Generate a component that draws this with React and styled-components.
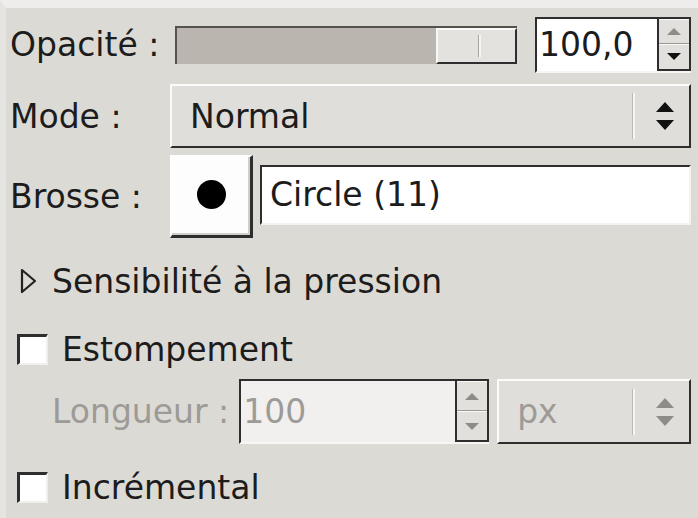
import React from "react";
import styled, { createGlobalStyle } from "styled-components";

const Global = createGlobalStyle`
  html, body { margin: 0; padding: 0; background: #dcdad5; }
  body { font-family: "DejaVu Sans", "Liberation Sans", sans-serif; }
`;

const Panel = styled.div`
  width: 698px;
  height: 518px;
  box-sizing: border-box;
  background: #dcdad5;
  border-top: 8px solid #eeedeb;
  border-left: 6px solid #e6e4e0;
  padding: 4px 7px 0 4px;
  font-family: "DejaVu Sans", "Liberation Sans", sans-serif;
  font-size: 33px;
  color: #1c1c1c;
  display: flex;
  flex-direction: column;
`;

const Table = styled.div`
  display: grid;
  grid-template-columns: 160px 1fr;
  grid-template-rows: 65px 64px 83px;
  row-gap: 7px;
`;

const Label = styled.div`
  display: flex;
  align-items: center;
  white-space: nowrap;
  color: ${(p) => (p.$disabled ? "#9d9b97" : "#1c1c1c")};
`;

const Cell = styled.div`
  display: flex;
  align-items: center;
  gap: ${(p) => p.$gap || 0}px;
  flex: ${(p) => (p.$grow ? 1 : "initial")};
  margin-left: ${(p) => p.$ml || 0}px;
`;

const Scale = styled.div`
  flex: 1;
  margin-left: 5px;
  height: 38px;
  box-sizing: border-box;
  background: #bbb5af;
  border-top: 2px solid #55524e;
  border-left: 2px solid #55524e;
  display: flex;
  justify-content: flex-end;
`;

const Handle = styled.div`
  width: 81px;
  height: 100%;
  box-sizing: border-box;
  background: #e4e2de;
  border-top: 2px solid #f8f8f6;
  border-left: 2px solid #f8f8f6;
  border-right: 2px solid #2e2e2e;
  border-bottom: 2px solid #2e2e2e;
  display: flex;
  align-items: center;
  justify-content: center;
  padding-left: 6px;
`;

const Grip = styled.div`
  width: 2px;
  height: 22px;
  background: #f6f5f3;
  border-left: 1px solid #a8a5a0;
`;

const Spin = styled.div`
  display: flex;
  width: ${(p) => p.$w}px;
  height: ${(p) => p.$h}px;
  box-sizing: border-box;
  border-top: 2px solid #2e2e2e;
  border-left: 2px solid #2e2e2e;
  border-bottom: 2px solid #f7f6f4;
  margin-left: ${(p) => p.$ml || 0}px;
`;

const SpinEntry = styled.div`
  flex: 1;
  background: ${(p) => (p.$disabled ? "#f1f0ee" : "#ffffff")};
  color: ${(p) => (p.$disabled ? "#9d9b97" : "#1c1c1c")};
  display: flex;
  align-items: center;
  padding-left: 2px;
`;

const SpinButtons = styled.div`
  width: 34px;
  box-sizing: border-box;
  border: 2px solid #2e2e2e;
  border-top: none;
  background: #dcdad5;
  display: flex;
  flex-direction: column;
`;

const SpinBtn = styled.div`
  flex: 1;
  display: flex;
  align-items: center;
  justify-content: center;
  background: #e2e0dc;
  border-top: 1px solid #f8f8f6;
  border-bottom: ${(p) => (p.$top ? "1px solid #9a9894" : "none")};
`;

const Combo = styled.div`
  flex: 1;
  height: ${(p) => p.$h || 64}px;
  box-sizing: border-box;
  background: #e0deda;
  border-top: 2px solid #fbfbfa;
  border-left: 2px solid #fbfbfa;
  border-right: 2px solid #2e2e2e;
  border-bottom: 2px solid #2e2e2e;
  display: flex;
  align-items: center;
  padding-left: 18px;
  color: ${(p) => (p.$disabled ? "#9d9b97" : "#1c1c1c")};
`;

const ComboText = styled.span`
  flex: 1;
`;

const ComboSep = styled.div`
  width: 2px;
  height: ${(p) => p.$h}px;
  background: #f6f5f3;
  border-left: 1px solid #bdbab5;
  margin-right: 10px;
`;

const ComboArrows = styled.div`
  width: 40px;
  display: flex;
  justify-content: center;
  margin-right: 4px;
`;

const BrushButton = styled.div`
  width: 83px;
  height: 83px;
  box-sizing: border-box;
  background: #fdfdfd;
  border-top: 2px solid #ffffff;
  border-left: 2px solid #ffffff;
  border-right: 3px solid #2e2e2e;
  border-bottom: 3px solid #2e2e2e;
  box-shadow: inset -2px -2px 0 #d0cec9;
  display: flex;
  align-items: center;
  justify-content: center;
`;

const Dot = styled.div`
  width: 29px;
  height: 29px;
  border-radius: 50%;
  background: #000;
  margin-top: -4px;
`;

const Entry = styled.div`
  flex: 1;
  height: 60px;
  box-sizing: border-box;
  background: #ffffff;
  border-top: 2px solid #2e2e2e;
  border-left: 2px solid #2e2e2e;
  border-bottom: 2px solid #f3f2f0;
  border-right: 2px solid #f3f2f0;
  display: flex;
  align-items: center;
  padding-left: 8px;
  margin-top: -4px;
`;

const Line = styled.div`
  display: flex;
  align-items: center;
  height: ${(p) => p.$h || 40}px;
  margin-top: ${(p) => p.$mt || 0}px;
  padding-left: ${(p) => p.$pl || 0}px;
  gap: ${(p) => p.$gap || 0}px;
  white-space: nowrap;
`;

const Check = styled.div`
  width: 31px;
  height: 31px;
  box-sizing: border-box;
  background: #ffffff;
  border-top: 3px solid #2e2e2e;
  border-left: 3px solid #2e2e2e;
  border-right: 2px solid #f0efed;
  border-bottom: 2px solid #f0efed;
`;

const Tri = ({ up, color }) => (
  <svg width="16" height="9" viewBox="0 0 16 9">
    <polygon points={up ? "1,8 15,8 8,1" : "1,1 15,1 8,8"} fill={color} />
  </svg>
);

const UpDown = ({ color }) => (
  <svg width="22" height="34" viewBox="0 0 22 34">
    <polygon points="2,13 20,13 11,3" fill={color} />
    <polygon points="2,21 20,21 11,31" fill={color} />
  </svg>
);

const Expander = () => (
  <svg width="17" height="26" viewBox="0 0 17 26">
    <polygon points="2,2 15,13 2,24" fill="none" stroke="#222" strokeWidth="2.2" strokeLinejoin="round" />
  </svg>
);

export default function App() {
  return (
    <>
      <Global />
      <Panel>
        <Table>
          <Label>Opacité :</Label>
          <Cell $gap={18}>
            <Scale>
              <Handle>
                <Grip />
              </Handle>
            </Scale>
            <Spin $w={156} $h={56}>
              <SpinEntry>100,0</SpinEntry>
              <SpinButtons>
                <SpinBtn $top>
                  <Tri up color="#8e8c88" />
                </SpinBtn>
                <SpinBtn>
                  <Tri color="#111" />
                </SpinBtn>
              </SpinButtons>
            </Spin>
          </Cell>

          <Label>Mode :</Label>
          <Cell>
            <Combo>
              <ComboText>Normal</ComboText>
              <ComboSep $h={46} />
              <ComboArrows>
                <UpDown color="#111" />
              </ComboArrows>
            </Combo>
          </Cell>

          <Label>Brosse :</Label>
          <Cell $gap={7}>
            <BrushButton>
              <Dot />
            </BrushButton>
            <Entry>Circle (11)</Entry>
          </Cell>
        </Table>

        <Line $mt={23} $h={40} $pl={10} $gap={15}>
          <Expander />
          <span>Sensibilité à la pression</span>
        </Line>

        <Line $mt={28} $h={40} $pl={7} $gap={14}>
          <Check />
          <span>Estompement</span>
        </Line>

        <Line $mt={10} $h={65} $pl={42}>
          <Label $disabled>Longueur :</Label>
          <Spin $w={250} $h={65} $ml={10}>
            <SpinEntry $disabled>100</SpinEntry>
            <SpinButtons>
              <SpinBtn $top>
                <Tri up color="#8e8c88" />
              </SpinBtn>
              <SpinBtn>
                <Tri color="#8e8c88" />
              </SpinBtn>
            </SpinButtons>
          </Spin>
          <Cell $grow $ml={8}>
            <Combo $h={65} $disabled>
              <ComboText>px</ComboText>
              <ComboSep $h={46} />
              <ComboArrows>
                <UpDown color="#8e8c88" />
              </ComboArrows>
            </Combo>
          </Cell>
        </Line>

        <Line $mt={23} $h={40} $pl={7} $gap={14}>
          <Check />
          <span>Incrémental</span>
        </Line>
      </Panel>
    </>
  );
}
